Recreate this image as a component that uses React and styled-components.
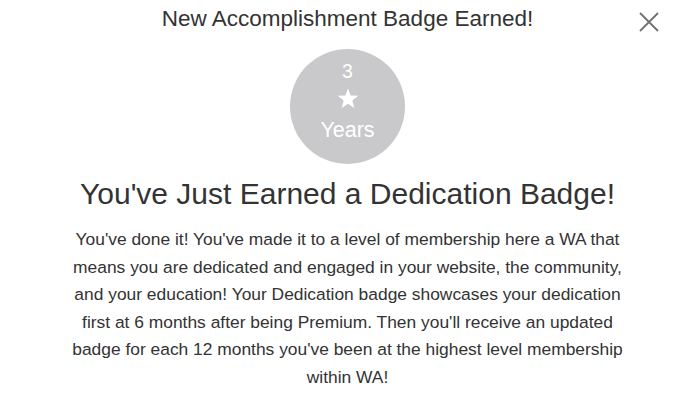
import styled, { createGlobalStyle } from 'styled-components';

const GlobalStyle = createGlobalStyle`
  body {
    margin: 0;
    background: #fff;
    font-family: "Liberation Sans", Arial, sans-serif;
    color: #333;
  }
`;

function CloseIcon() {
  return (
    <svg width="22" height="22" viewBox="0 0 22 22">
      <path d="M2 2 L20 20 M20 2 L2 20" stroke="#707070" strokeWidth="1.8" />
    </svg>
  );
}

function StarIcon() {
  return (
    <svg width="22" height="21" viewBox="0 0 24 23">
      <path
        d="M12 0.5 L14.9 8.3 L23.3 8.6 L16.7 13.8 L19 21.9 L12 17.2 L5 21.9 L7.3 13.8 L0.7 8.6 L9.1 8.3 Z"
        fill="#fff"
      />
    </svg>
  );
}

function App() {
  return (
    <>
      <GlobalStyle />
      <Modal>
        <Close aria-label="Close">
          <CloseIcon />
        </Close>
        <Title>New Accomplishment Badge Earned!</Title>
        <Badge>
          <BadgeNumber>3</BadgeNumber>
          <BadgeStar>
            <StarIcon />
          </BadgeStar>
          <BadgeLabel>Years</BadgeLabel>
        </Badge>
        <Heading>You've Just Earned a Dedication Badge!</Heading>
        <Body>
          You've done it! You've made it to a level of membership here a WA that
          means you are dedicated and engaged in your website, the community,
          and your education! Your Dedication badge showcases your dedication
          first at 6 months after being Premium. Then you'll receive an updated
          badge for each 12 months you've been at the highest level membership
          within WA!
        </Body>
      </Modal>
    </>
  );
}

export default App;

const Modal = styled.div`
  position: relative;
  width: 695px;
  height: 411px;
  display: flex;
  flex-direction: column;
  align-items: center;
  padding-top: 5px;
  box-sizing: border-box;
  overflow: hidden;
`;

const Close = styled.button`
  position: absolute;
  top: 11px;
  right: 35px;
  padding: 0;
  border: 0;
  background: none;
  cursor: pointer;
  line-height: 0;
`;

const Title = styled.h2`
  margin: 0;
  font-size: 22.5px;
  font-weight: 400;
  line-height: 28px;
  color: #333;
`;

const Badge = styled.div`
  margin-top: 16px;
  width: 115px;
  height: 115px;
  border-radius: 50%;
  background: #c9c9cb;
  color: #fff;
  display: flex;
  flex-direction: column;
  align-items: center;
  padding-top: 12px;
  box-sizing: border-box;
`;

const BadgeNumber = styled.span`
  font-size: 19.5px;
  line-height: 20px;
`;

const BadgeStar = styled.span`
  margin-top: 7px;
  line-height: 0;
`;

const BadgeLabel = styled.span`
  margin-top: 9px;
  font-size: 21.5px;
  line-height: 24px;
`;

const Heading = styled.h1`
  margin: 12px 0 0;
  font-size: 30px;
  font-weight: 400;
  line-height: 36px;
  color: #333;
`;

const Body = styled.p`
  margin: 14px 0 0;
  width: 564px;
  font-size: 17.4px;
  line-height: 27.5px;
  text-align: center;
  color: #333;
`;
